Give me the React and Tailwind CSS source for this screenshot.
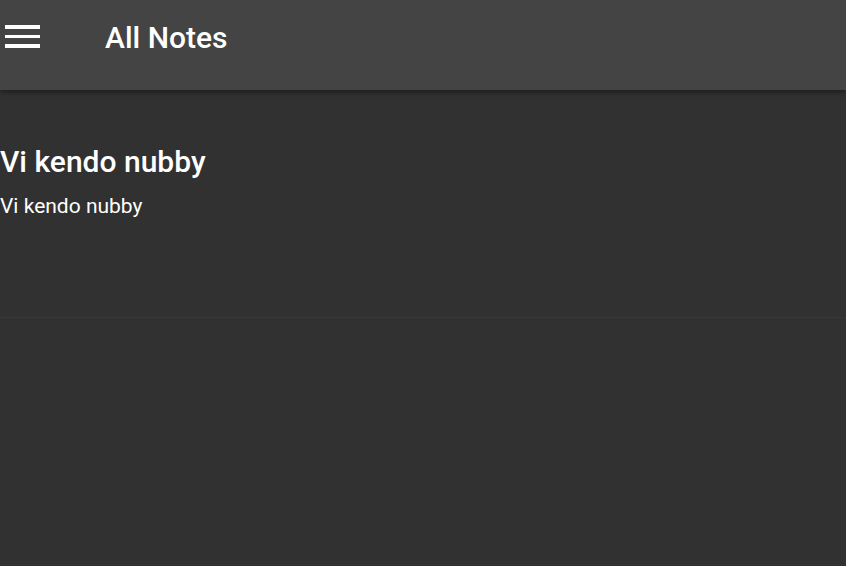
import React from "react";

const notes = [{ id: 1, title: "Vi kendo nubby", body: "Vi kendo nubby" }];

const App = () => {
    return (
        <div className="min-h-screen w-full bg-[#313131] text-white font-['Roboto',sans-serif]">
            <header className="relative z-10 h-[90px] bg-[#444444] shadow-[0_2px_6px_rgba(0,0,0,0.45)] flex items-start pt-[20px]">
                <button className="ml-[5px] mt-[5px] flex flex-col gap-[6px] w-[35px]">
                    <span className="block h-[3.5px] w-full bg-white" />
                    <span className="block h-[3.5px] w-full bg-white" />
                    <span className="block h-[3.5px] w-full bg-white" />
                </button>
                <h1 className="ml-[65px] text-[30px] leading-[36px] font-medium">All Notes</h1>
            </header>

            <main>
                {notes.map((note) => (
                    <div key={note.id} className="h-[228px] border-b border-[#383838] pt-[54px]">
                        <h2 className="text-[30px] leading-[36px] font-medium">{note.title}</h2>
                        <p className="mt-[13px] text-[21px] leading-[26px]">{note.body}</p>
                    </div>
                ))}
            </main>
        </div>
    );
};

export default App;
